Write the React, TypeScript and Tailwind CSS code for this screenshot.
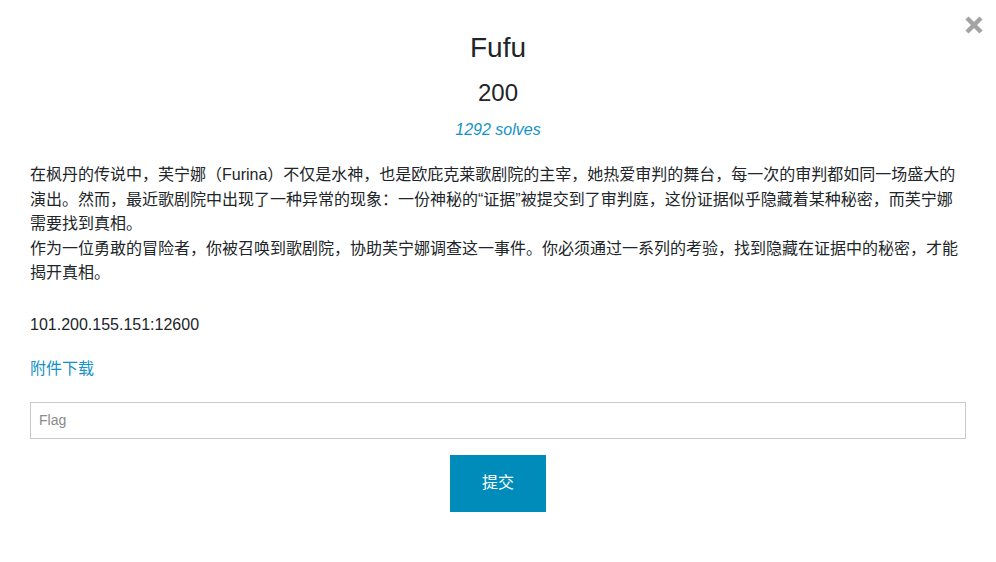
import React from "react";

export default function App() {
  const font = { fontFamily: '"Liberation Sans", Arial, "Noto Sans CJK SC", sans-serif' };
  return (
    <div className="relative w-[996px] h-[562px] bg-white text-[#212529]" style={font}>
      <button className="absolute right-[12px] top-[15px] w-[20px] h-[20px] text-[#a3a3a3]" aria-label="close">
        <svg viewBox="0 0 20 20" width="20" height="20">
          <path d="M3 3 L17 17 M17 3 L3 17" stroke="currentColor" strokeWidth="4.5" strokeLinecap="butt" />
        </svg>
      </button>
      <div className="px-[30px] pt-[30px]">
        <h1 className="text-center text-[28px] leading-[36px] font-normal">Fufu</h1>
        <div className="text-center text-[24px] leading-[30px] mt-[12px]">200</div>
        <div className="text-center text-[16px] leading-[24px] italic text-[#1592c8] mt-[10px]">1292 solves</div>
        <div className="mt-[21px] text-[16px] leading-[24.5px]">
          <p>
            在枫丹的传说中，芙宁娜（Furina）不仅是水神，也是欧庇克莱歌剧院的主宰，她热爱审判的舞台，每一次的审判都如同一场盛大的演出。然而，最近歌剧院中出现了一种异常的现象：一份神秘的“证据”被提交到了审判庭，这份证据似乎隐藏着某种秘密，而芙宁娜需要找到真相。
            <br />
            作为一位勇敢的冒险者，你被召唤到歌剧院，协助芙宁娜调查这一事件。你必须通过一系列的考验，找到隐藏在证据中的秘密，才能揭开真相。
          </p>
          <p className="mt-[27px]">101.200.155.151:12600</p>
          <p className="mt-[20px]">
            <a className="text-[#1592c8]">附件下载</a>
          </p>
        </div>
        <input
          className="mt-[20px] block w-full h-[37px] border border-[#c9c9c9] px-[8px] text-[14px] placeholder-[#8a8a8a] outline-none"
          placeholder="Flag"
          style={font}
        />
        <div className="flex justify-center mt-[16px]">
          <button className="w-[96px] h-[57px] bg-[#008cba] text-white text-[16px]">提交</button>
        </div>
      </div>
    </div>
  );
}
